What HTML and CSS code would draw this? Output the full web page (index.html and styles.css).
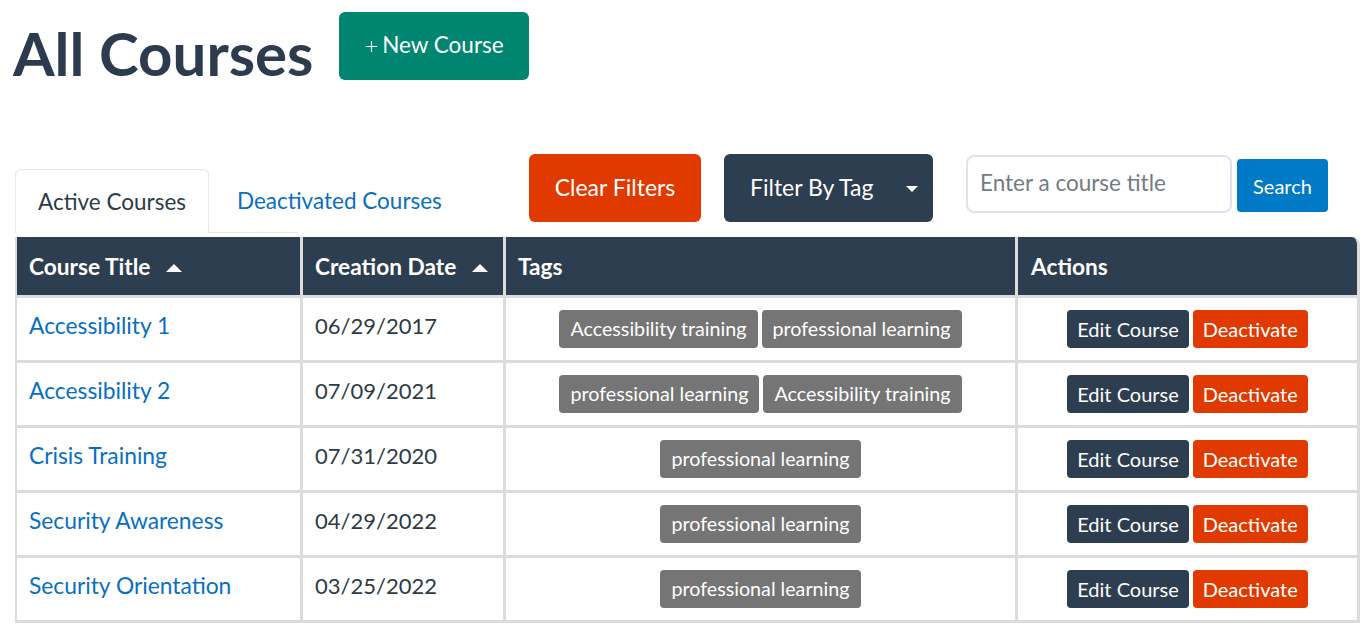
FILE: index.html
```html
<!DOCTYPE html>
<html lang="en">
<head>
<meta charset="utf-8">
<title>All Courses</title>
<link rel="stylesheet" href="styles.css">
</head>
<body>
<div class="page">
  <header class="page-head">
    <h1 class="title">All Courses</h1>
    <button class="btn btn-green new-btn"><svg class="plus" viewBox="0 0 14 14" aria-hidden="true"><path d="M7 1v12M1 7h12" stroke="currentColor" stroke-width="1.3" fill="none"/></svg>New Course</button>
  </header>

  <div class="toolbar">
    <div class="tabs-wrap">
      <ul class="tabs">
        <li class="tab tab-active">Active Courses</li>
        <li class="tab tab-link">Deactivated Courses</li>
      </ul>
    </div>
    <button class="btn btn-orange clear-btn">Clear Filters</button>
    <button class="btn btn-navy filter-btn"><span>Filter By Tag</span><span class="drop-caret"></span></button>
    <input class="search-input" type="text" placeholder="Enter a course title">
    <button class="btn btn-blue search-btn">Search</button>
  </div>

  <table class="courses">
    <colgroup>
      <col class="c1"><col class="c2"><col class="c3"><col class="c4">
    </colgroup>
    <thead>
      <tr>
        <th>Course Title <span class="sort-caret"></span></th>
        <th>Creation Date <span class="sort-caret"></span></th>
        <th>Tags</th>
        <th class="th-last">Actions</th>
      </tr>
    </thead>
    <tbody>
      <tr>
        <td><a class="course-link">Accessibility 1</a></td>
        <td>06/29/2017</td>
        <td class="center"><span class="badge">Accessibility training</span><span class="badge">professional learning</span></td>
        <td class="center"><button class="btn-sm btn-navy">Edit Course</button><button class="btn-sm btn-orange">Deactivate</button></td>
      </tr>
      <tr>
        <td><a class="course-link">Accessibility 2</a></td>
        <td>07/09/2021</td>
        <td class="center"><span class="badge">professional learning</span><span class="badge">Accessibility training</span></td>
        <td class="center"><button class="btn-sm btn-navy">Edit Course</button><button class="btn-sm btn-orange">Deactivate</button></td>
      </tr>
      <tr>
        <td><a class="course-link">Crisis Training</a></td>
        <td>07/31/2020</td>
        <td class="center"><span class="badge">professional learning</span></td>
        <td class="center"><button class="btn-sm btn-navy">Edit Course</button><button class="btn-sm btn-orange">Deactivate</button></td>
      </tr>
      <tr>
        <td><a class="course-link">Security Awareness</a></td>
        <td>04/29/2022</td>
        <td class="center"><span class="badge">professional learning</span></td>
        <td class="center"><button class="btn-sm btn-navy">Edit Course</button><button class="btn-sm btn-orange">Deactivate</button></td>
      </tr>
      <tr>
        <td><a class="course-link">Security Orientation</a></td>
        <td>03/25/2022</td>
        <td class="center"><span class="badge">professional learning</span></td>
        <td class="center"><button class="btn-sm btn-navy">Edit Course</button><button class="btn-sm btn-orange">Deactivate</button></td>
      </tr>
    </tbody>
  </table>
</div>
</body>
</html>
```

FILE: styles.css
```css
* { box-sizing: border-box; }

html, body {
  margin: 0;
  padding: 0;
  background: #ffffff;
}

body {
  font-family: "Lato", "Liberation Sans", Arial, sans-serif;
  color: #2d3b45;
}

.page {
  padding: 0 0 0 15px;
}

/* ---------- header ---------- */
.page-head {
  display: flex;
  align-items: flex-start;
}

.title {
  margin: 17px 0 0 -2px;
  font-size: 60px;
  line-height: 1.2;
  font-weight: 700;
  color: #2d3b4f;
}

.btn {
  font-family: "Lato", "Liberation Sans", Arial, sans-serif;
  border: none;
  color: #ffffff;
  cursor: pointer;
  display: inline-flex;
  align-items: center;
  padding: 0;
}

.btn-green { background: #008571; }
.btn-orange { background: #e03a00; }
.btn-navy { background: #2d3e50; }
.btn-blue { background: #0079c6; }

.new-btn {
  margin: 12px 0 0 26px;
  width: 190px;
  height: 68px;
  border-radius: 6px;
  font-size: 22.5px;
  justify-content: center;
  padding-bottom: 3px;
}

.plus {
  width: 13px;
  height: 13px;
  margin-right: 4px;
  margin-top: 3px;
}

/* ---------- toolbar ---------- */
.toolbar {
  display: flex;
  align-items: flex-start;
  margin-top: 65px;
}

.tabs-wrap {
  flex: 0 0 514px;
  margin-top: 15px;
}

.tabs {
  list-style: none;
  margin: 0;
  padding: 0;
  display: flex;
  width: 283px;
  height: 64px;
  border-bottom: 1px solid #e8e8e8;
  white-space: nowrap;
}

.tab {
  flex: 0 0 auto;
  display: flex;
  align-items: center;
  font-size: 22.5px;
  height: 64px;
  padding-bottom: 1px;
}

.tab-active {
  width: 194px;
  padding: 0 0 1px 22px;
  border: 1px solid #e6e6e6;
  border-bottom: none;
  border-radius: 6px 6px 0 0;
  background: #ffffff;
  color: #2d3b45;
}

.tab-link {
  padding-left: 28px;
  color: #0770c2;
  height: 63px;
}

.clear-btn {
  width: 172px;
  height: 68px;
  border-radius: 6px;
  font-size: 23px;
  justify-content: center;
  padding-bottom: 3px;
}

.filter-btn {
  margin-left: 23px;
  width: 209px;
  height: 68px;
  border-radius: 6px;
  font-size: 23px;
  justify-content: space-between;
  padding: 0 15px 3px 26px;
}

.drop-caret {
  width: 0;
  height: 0;
  border-left: 6px solid transparent;
  border-right: 6px solid transparent;
  border-top: 6px solid #ffffff;
  margin-top: 5px;
}

.search-input {
  margin: 1px 0 0 33px;
  width: 266px;
  height: 58px;
  border: 2px solid #dbe3ec;
  border-radius: 8px;
  padding: 0 12px 4px;
  font-family: "Lato", "Liberation Sans", Arial, sans-serif;
  font-size: 22.5px;
  color: #2d3b45;
  outline: none;
}

.search-input::placeholder {
  color: #737b83;
}

.search-btn {
  margin: 5px 0 0 5px;
  width: 91px;
  height: 53px;
  border-radius: 4px;
  font-size: 20px;
  justify-content: center;
}

/* ---------- table ---------- */
.courses {
  margin-top: 4px;
  width: 1345px;
  table-layout: fixed;
  border-collapse: separate;
  border-spacing: 0;
  border-left: 2px solid #dcdcdc;
}

.c1 { width: 286px; }
.c2 { width: 203px; }
.c3 { width: 512px; }
.c4 { width: 342px; }

.courses th {
  height: 61px;
  background: #2d3e50;
  color: #ffffff;
  font-size: 22.7px;
  font-weight: 700;
  text-align: left;
  padding: 0 12px;
  border-right: 3px solid #dcdcdc;
  border-bottom: 3px solid #dcdcdc;
  white-space: nowrap;
}

.courses th.th-last {
  padding-left: 13px;
  border-top-right-radius: 8px;
}

.sort-caret {
  display: inline-block;
  width: 0;
  height: 0;
  border-left: 8.5px solid transparent;
  border-right: 8.5px solid transparent;
  border-bottom: 8px solid #ffffff;
  margin-left: 10px;
  vertical-align: 3px;
}

.courses td {
  height: 65px;
  padding: 0 12px 8px;
  font-size: 22px;
  color: #2d3b45;
  border-right: 3px solid #dcdcdc;
  border-bottom: 3px solid #dcdcdc;
  vertical-align: middle;
  white-space: nowrap;
}

.courses td.center {
  text-align: center;
  padding: 0 0;
}

.course-link {
  color: #0770c2;
  text-decoration: none;
  font-size: 22.8px;
}

.badge {
  display: inline-block;
  background: #757575;
  color: #ffffff;
  font-size: 19.7px;
  height: 38px;
  line-height: 38px;
  padding: 0 11px;
  border-radius: 4px;
  margin: 0 2px;
}

.btn-sm {
  font-family: "Lato", "Liberation Sans", Arial, sans-serif;
  border: none;
  color: #ffffff;
  font-size: 20px;
  height: 38px;
  padding: 0 10px;
  border-radius: 4px;
  margin: 0 2px;
  vertical-align: middle;
}
```
